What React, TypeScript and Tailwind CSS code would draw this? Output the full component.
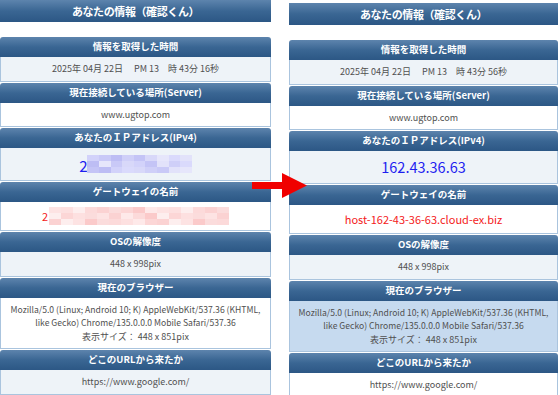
import React from "react";

const HEAD =
  "h-[20px] rounded-t-[3px] bg-gradient-to-b from-[#5d84ad] via-[#3a6693] to-[#2c5785] flex items-center justify-center text-white font-bold text-[9.5px] leading-none";

function Section({
  title,
  body,
  children,
}: {
  title: string;
  body: string;
  children: React.ReactNode;
}) {
  return (
    <div className="mb-[1px]">
      <div className={HEAD}>{title}</div>
      <div className={body}>{children}</div>
    </div>
  );
}

const blue = ["#d2d2fa", "#c4c4f6", "#e2e2fa", "#cfcff8", "#dadafc", "#bdbdf4", "#e6e6fb", "#c9c9f7", "#d8d8f9"];
const pink = ["#fde3e3", "#fbd2d2", "#fee9e9", "#fcdada", "#fbcaca", "#fdeeee", "#fcd6d6", "#fde0e0", "#fbdcdc"];

function Mosaic({ cols, rows, cw, ch, palette }: { cols: number; rows: number; cw: number; ch: number; palette: string[] }) {
  const cells = [];
  for (let r = 0; r < rows; r++) {
    for (let c = 0; c < cols; c++) {
      const col = palette[(c * 7 + r * 5 + c * r * 3) % palette.length];
      cells.push(<div key={r + "-" + c} style={{ width: cw, height: ch, background: col }} />);
    }
  }
  return (
    <div className="inline-flex flex-wrap" style={{ width: cols * cw }}>
      {cells}
    </div>
  );
}

function Panel({ right }: { right: boolean }) {
  const light = "border-x border-b border-[#aac4de] bg-[#eef3f8] flex flex-col items-center justify-center text-[9px] text-[#505050]";
  const white = "border-x border-b border-[#aac4de] bg-white flex flex-col items-center justify-center text-[9px] text-[#505050]";
  return (
    <div className={right ? "w-[269px] mt-[3px]" : "w-[271px]"}>
      <div className="h-[22px] bg-gradient-to-b from-[#5d84ad] via-[#3a6693] to-[#2c5785] flex items-center justify-center text-white font-bold text-[11px] tracking-[-0.4px] leading-none">
        あなたの情報（確認くん）
      </div>
      <div className="h-[15px]" />
      <Section title="情報を取得した時間" body={light + " h-[25px]"}>
        <span className="whitespace-pre">{right ? "2025年 04月 22日　 PM 13　時 43分 56秒" : "2025年 04月 22日　 PM 13　時 43分 16秒"}</span>
      </Section>
      <Section title="現在接続している場所(Server)" body={white + " h-[24px]"}>
        www.ugtop.com
      </Section>
      <Section title="あなたのＩＰアドレス(IPv4)" body={light + " h-[33px]"}>
        {right ? (
          <span className="text-[14.5px] text-[#1e1ef0] leading-none">162.43.36.63</span>
        ) : (
          <div className="flex items-end">
            <span className="text-[15px] text-[#1e1ef0] leading-none">2</span>
            <Mosaic cols={9} rows={3} cw={11.6} ch={6} palette={blue} />
          </div>
        )}
      </Section>
      <Section title="ゲートウェイの名前" body={white + " h-[29px]"}>
        {right ? (
          <span className="text-[11px] text-[#f42020] leading-none">host-162-43-36-63.cloud-ex.biz</span>
        ) : (
          <div className="flex items-center">
            <span className="text-[11px] text-[#f42020] leading-none mr-[1px]">2</span>
            <Mosaic cols={15} rows={3} cw={12} ch={6} palette={pink} />
          </div>
        )}
      </Section>
      <Section title="OSの解像度" body={light + " h-[25px]"}>
        448 x 998pix
      </Section>
      <Section
        title="現在のブラウザー"
        body={
          right
            ? "border-x border-b border-[#aac4de] bg-[#c6daef] flex flex-col items-center justify-center text-[9px] text-[#505050] h-[51px]"
            : white + " h-[51px]"
        }
      >
        <div className="text-center text-[8.6px] leading-[13.5px] px-[4px]">
          Mozilla/5.0 (Linux; Android 10; K) AppleWebKit/537.36 (KHTML, like Gecko) Chrome/135.0.0.0 Mobile Safari/537.36
          <br />
          <span className="text-[9px]">表示サイズ： 448 x 851pix</span>
        </div>
      </Section>
      <Section title="どこのURLから来たか" body={(right ? white : light) + " h-[25px]"}>
        https://www.google.com/
      </Section>
    </div>
  );
}

export default function App() {
  return (
    <div className="relative w-[560px] h-[395px] overflow-hidden bg-white flex font-['Noto_Sans_CJK_JP','Noto_Sans',sans-serif]">
      <Panel right={false} />
      <div className="w-[18px]" />
      <Panel right={true} />
      <svg className="absolute left-[252px] top-[173px]" width="56" height="26" viewBox="0 0 56 26">
        <polygon points="0,9 30,9 30,0 55,12.5 30,25 30,16 0,16" fill="#f00000" />
      </svg>
    </div>
  );
}
